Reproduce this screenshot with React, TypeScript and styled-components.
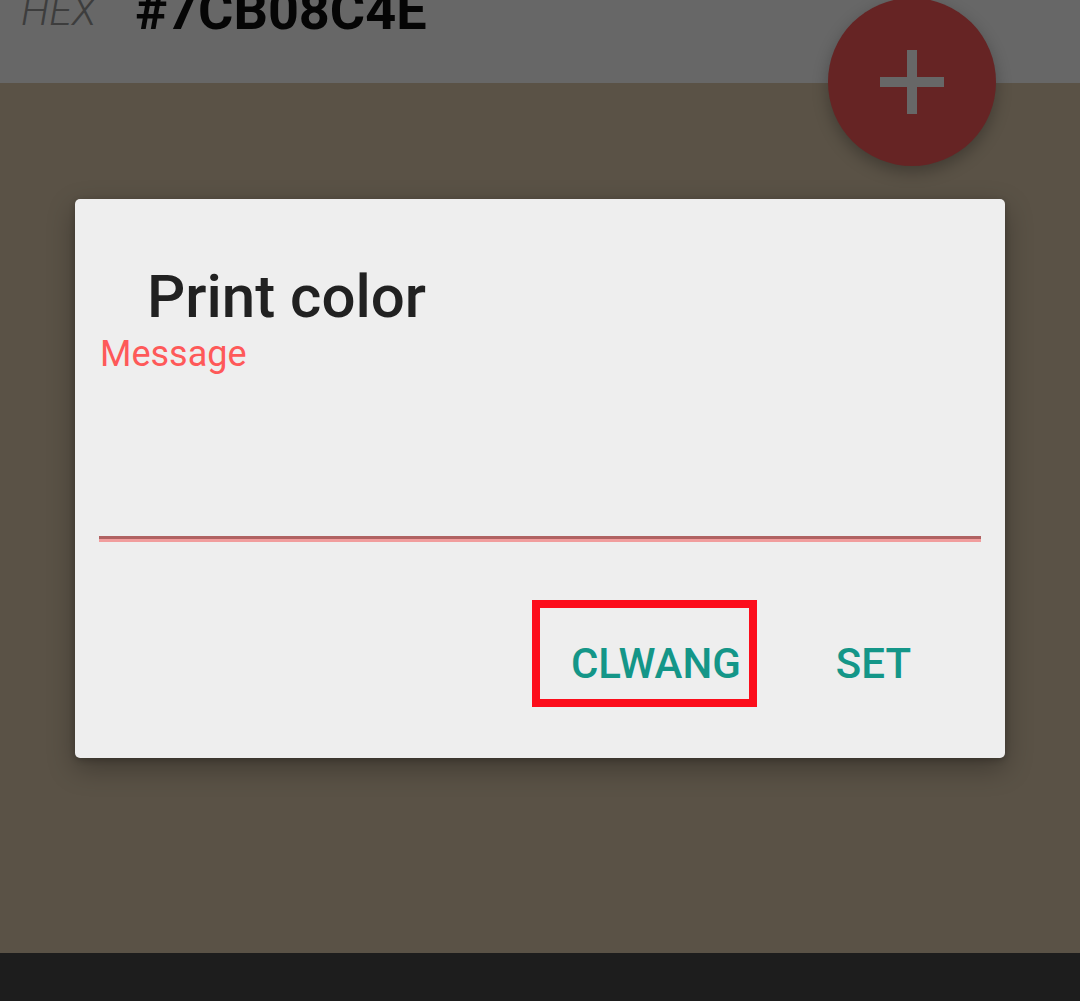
import React from "react";
import styled, { createGlobalStyle } from "styled-components";

const Global = createGlobalStyle`
  html, body { margin: 0; padding: 0; }
  body { font-family: Roboto, "Noto Sans", sans-serif; background: #5a5246; }
`;

const Screen = styled.div`
  position: relative;
  width: 1080px;
  height: 1001px;
  display: flex;
  flex-direction: column;
  overflow: hidden;
  background: #5a5246;
`;

const TopBar = styled.div`
  height: 83px;
  flex: none;
  background: #676767;
  display: flex;
  align-items: flex-start;
  padding-left: 21px;
  gap: 39px;
  overflow: hidden;
`;

const HexLabel = styled.div`
  font-family: Roboto, sans-serif;
  font-style: italic;
  font-weight: 300;
  font-size: 41px;
  line-height: 1;
  color: #3d3d3d;
  margin-top: -9px;
`;

const HexValue = styled.div`
  font-family: Roboto, sans-serif;
  font-weight: 700;
  font-size: 54px;
  line-height: 1;
  color: #050505;
  margin-top: -16px;
`;

const Content = styled.div`
  flex: 1;
  display: flex;
  flex-direction: column;
  align-items: flex-start;
  padding: 116px 75px 0;
`;

const NavBar = styled.div`
  height: 48px;
  flex: none;
  background: #1d1d1d;
`;

const Fab = styled.div`
  position: absolute;
  left: 828px;
  top: -2px;
  width: 168px;
  height: 168px;
  border-radius: 50%;
  background: #662424;
  box-shadow: 0 6px 16px rgba(0, 0, 0, 0.28);
  display: flex;
  align-items: center;
  justify-content: center;
`;

const Dialog = styled.div`
  width: 930px;
  box-sizing: border-box;
  background: #eeeeee;
  border-radius: 5px;
  box-shadow: 0 10px 28px rgba(0, 0, 0, 0.3), 0 2px 6px rgba(0, 0, 0, 0.2);
  padding: 68px 24px 51px;
  display: flex;
  flex-direction: column;
`;

const Title = styled.div`
  font-size: 60px;
  font-weight: 500;
  line-height: 1;
  color: #212121;
  margin-left: 48px;
`;

const FieldLabel = styled.div`
  font-size: 36px;
  font-weight: 400;
  line-height: 1;
  color: #fe5959;
  margin: 9px 0 0 1px;
`;

const InputArea = styled.div`
  height: 164px;
`;

const Underline = styled.div`
  height: 3px;
  background: #b06262;
  border-bottom: 3px solid #f19d9d;
`;

const ButtonRow = styled.div`
  display: flex;
  justify-content: flex-end;
  align-items: center;
  margin-top: 58px;
  padding-right: 70px;
  gap: 79px;
`;

const Highlight = styled.div`
  border: 8px solid #fc0d1b;
  padding: 35px 8px 14px 31px;
`;

const TextButton = styled.div<{ $offset?: number }>`
  font-size: 42px;
  font-weight: 500;
  line-height: 1;
  color: #149688;
  padding-top: ${(p) => p.$offset ?? 0}px;
`;

export default function App() {
  return (
    <>
      <Global />
      <Screen>
        <TopBar>
          <HexLabel>HEX</HexLabel>
          <HexValue>#7CB08C4E</HexValue>
        </TopBar>
        <Content>
          <Dialog>
            <Title>Print color</Title>
            <FieldLabel>Message</FieldLabel>
            <InputArea />
            <Underline />
            <ButtonRow>
              <Highlight>
                <TextButton>CLWANG</TextButton>
              </Highlight>
              <TextButton $offset={21}>SET</TextButton>
            </ButtonRow>
          </Dialog>
        </Content>
        <NavBar />
        <Fab>
          <svg width="64" height="64" viewBox="0 0 64 64">
            <rect x="0" y="27" width="64" height="10" fill="#676767" />
            <rect x="27" y="0" width="10" height="64" fill="#676767" />
          </svg>
        </Fab>
      </Screen>
    </>
  );
}
